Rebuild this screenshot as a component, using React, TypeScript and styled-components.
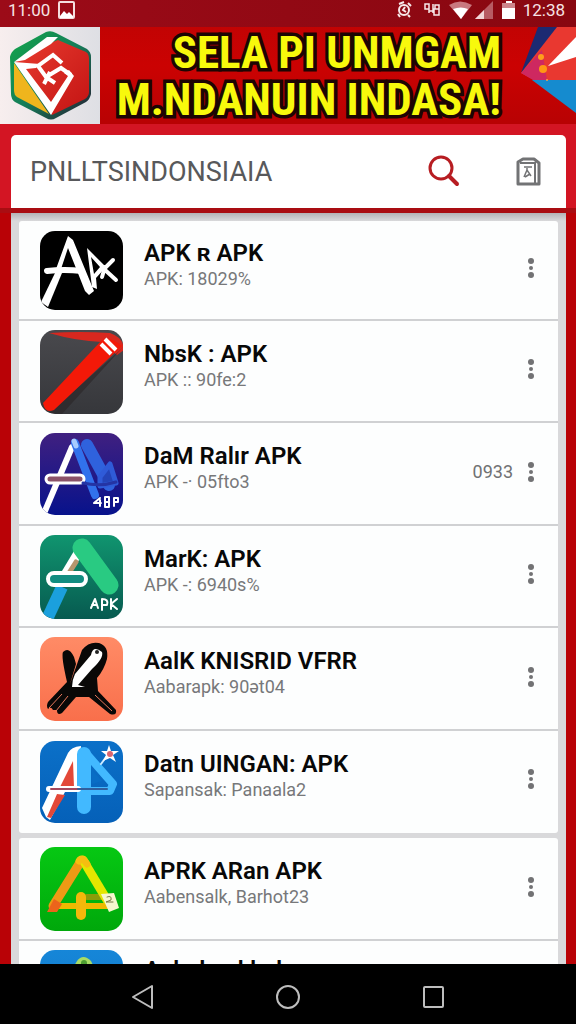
import React, { useId } from "react";
import styled, { createGlobalStyle } from "styled-components";

const GlobalStyle = createGlobalStyle`
  *, *::before, *::after { box-sizing: border-box; }
  html, body, #root { height: 100%; }
  body {
    margin: 0;
    background: #b90206;
    font-family: Roboto, "Liberation Sans", sans-serif;
    color: #080808;
  }
`;

const Screen = styled.div`
  display: flex;
  flex-direction: column;
  height: 100vh;
  overflow: hidden;
`;

const StatusBar = styled.div`
  display: flex;
  flex: none;
  align-items: center;
  justify-content: space-between;
  height: 27px;
  padding: 0 11px 7px 8px;
  background: linear-gradient(90deg, #9c0b18, #880710);
  color: #f6e3e4;
  font-size: 17px;
  line-height: 20px;
`;

const StatusGroup = styled.div<{ $gap: number }>`
  display: flex;
  align-items: center;
  gap: ${(p) => p.$gap}px;
`;

const Glyph = styled.svg`
  display: block;
  flex: none;
`;

const Banner = styled.div`
  display: flex;
  flex: none;
  align-items: stretch;
  justify-content: space-between;
  height: 97px;
  background: linear-gradient(180deg, #c20303, #cb0202 40%, #b80203);
`;

const Slogan = styled.h1`
  flex: 1;
  min-width: 0;
  margin: 0;
  padding: 2px 19px 0 0;
  color: #f8f90c;
  font-family: "Liberation Sans Narrow", "Roboto Condensed", Roboto, sans-serif;
  font-size: 45px;
  font-weight: 700;
  line-height: 47px;
  text-align: right;
  white-space: nowrap;
  -webkit-text-stroke: 7px #1c0503;
  paint-order: stroke fill;
`;

const SloganLine = styled.span`
  display: block;
`;

const Header = styled.header`
  flex: none;
  padding: 11px 10px 5px 11px;
  background: linear-gradient(180deg, #d31523 0 84px, #a90d12 84px);
`;

const SearchBar = styled.form`
  display: flex;
  align-items: center;
  height: 73px;
  padding: 0 25px 0 19px;
  border-radius: 5px 5px 0 0;
  background: #fff;
`;

const SearchInput = styled.input`
  flex: 1;
  min-width: 0;
  padding: 0;
  border: 0;
  outline: 0;
  background: none;
  color: #58595b;
  font: 400 27px/40px Roboto, "Liberation Sans", sans-serif;
`;

const IconButton = styled.button`
  display: grid;
  flex: none;
  place-items: center;
  margin: 0;
  padding: 0;
  border: 0;
  background: none;
  cursor: pointer;
`;

const SearchActions = styled.div`
  display: flex;
  align-items: center;
  gap: 54px;
`;

const Panel = styled.main`
  display: flex;
  flex: 1;
  flex-direction: column;
  gap: 5px;
  min-height: 0;
  margin: 0 10px 0 11px;
  padding: 8px 8px 0;
  overflow: hidden;
  background: linear-gradient(180deg, #b3b3b6, #d9d9db 8px);
`;

const Card = styled.ul`
  flex: none;
  margin: 0;
  padding: 0;
  border-radius: 3px;
  background: #fdfefe;
  list-style: none;
`;

const Row = styled.li`
  display: flex;
  align-items: center;
  height: 103px;
  padding: 9px 15px 8px 21px;
  border-bottom: 2px solid #d0d1d3;

  &:nth-child(even) { height: 102px; }
  &:first-child:not(:nth-last-child(2)) { height: 100px; }
  &:last-child { border-bottom-color: transparent; }
`;

const Labels = styled.div<{ $raised: boolean }>`
  flex: 1;
  min-width: 0;
  padding: 0 0 ${(p) => (p.$raised ? 20 : 12)}px 21px;
  white-space: nowrap;
`;

const AppName = styled.h2`
  margin: 0;
  font-size: 24px;
  font-weight: 600;
  line-height: 28px;
`;

const AppInfo = styled.p`
  min-height: 24px;
  margin: 0;
  color: #77787a;
  font-size: 18px;
  line-height: 24px;
`;

const Side = styled.div`
  display: flex;
  align-items: center;
  gap: 6px;
  padding-bottom: 5px;
  color: #707173;
  font-size: 18px;
`;

const NavBar = styled.nav`
  display: flex;
  flex: none;
  align-items: center;
  justify-content: center;
  gap: 117px;
  height: 60px;
  padding-top: 5px;
  background: #000;
`;

type ArtName = "black" | "pen" | "indigo" | "teal" | "orange" | "blue" | "green" | "azure";

const tileColors: Record<ArtName, [string, string]> = {
  black: ["#000", "#000"],
  pen: ["#49494d", "#36373b"],
  indigo: ["#402080", "#06128c"],
  teal: ["#10956f", "#075a50"],
  orange: ["#ff8b66", "#f96f4b"],
  blue: ["#0b70c8", "#0560b8"],
  green: ["#06c813", "#00a80b"],
  azure: ["#1686d8", "#1078c8"],
};

const art: Record<ArtName, React.ReactNode> = {
  black: (
    <g fill="#fff" stroke="#fff" strokeLinecap="round" strokeLinejoin="round">
      <path d="M28 5 33 9 54 60 49 64 45 60 28 17 21 38H16Z" stroke="none" />
      <path d="M15 42H22L8 76 1 71Z" stroke="none" />
      <path d="M7 40Q24 38 42 40" fill="none" strokeWidth="6" />
      <path d="M47 17 66 36 56 47 57 58 52 56ZM51 26 54 43 60 36Z" fillRule="evenodd" stroke="none" />
      <path d="M65 36 62 46M73 29 64 38 76 49" fill="none" strokeWidth="4" />
    </g>
  ),
  pen: (
    <>
      <path d="M9 3Q40 1 70 3Q84 8 84 20L77 25 62 12Q36 11 9 3Z" fill="#d8281f" />
      <path d="M9 83 78 22 84 16 22 84Z" fill="#2a2527" opacity=".6" />
      <path d="M3 73 62 10Q70 6 82 16L14 80Q5 84 3 73Z" fill="#f31908" />
      <path d="M65 9 76 20M61 14 71 24" stroke="#fff" strokeWidth="4" />
    </>
  ),
  indigo: (
    <g fill="none" strokeLinecap="round" strokeLinejoin="round">
      <path d="M5 78 32 14" stroke="#fff" strokeWidth="6" />
      <path d="M35 10 55 62" stroke="#3171ec" strokeWidth="8" />
      <path d="M47 12 69 52" stroke="#2f62dd" strokeWidth="12" />
      <path d="M60 44 70 31 76 50 60 53Z" fill="#2444b8" stroke="#2f5bd8" strokeWidth="5" />
      <path d="M34 8 36 13" stroke="#a6cbff" strokeWidth="5" />
      <rect x="6" y="42" width="38" height="8" rx="4" fill="#8b5269" stroke="#fff" strokeWidth="3" />
      <path d="M43 50Q60 54 76 49" stroke="#2434a4" strokeWidth="3" />
      <path d="M60 65 54 70H61M60 67V73M65 64V74H69V64ZM65 69H69M74 73V65H78V69H74" stroke="#fff" strokeWidth="2" />
    </g>
  ),
  teal: (
    <g fill="none" strokeLinecap="round" strokeLinejoin="round">
      <path d="M26 38 38 18" stroke="#fff" strokeWidth="9" />
      <path d="M29 38 36 27" stroke="#b6966d" strokeWidth="5" />
      <path d="M22 52 8 82" stroke="#1ba0dd" strokeWidth="12" strokeLinecap="butt" />
      <path d="M42 13 69 50" stroke="#29ca82" strokeWidth="19" />
      <rect x="8" y="38" width="38" height="12" rx="6" fill="#128d81" stroke="#fff" strokeWidth="4" />
      <path d="M51 73 55 64 58 73M52 70H57M62 75V64Q69 64 67 70H62M71 64V74M77 64 71 69 77 74" stroke="#fff" strokeWidth="2" />
    </g>
  ),
  orange: (
    <>
      <path d="M30 47 42 13Q49 4 59 6Q69 9 67 22Q64 33 57 41L58 54 76 73Q77 79 70 77L49 60 36 60 22 76Q17 79 17 73L13 73Q11 69 8 72Q6 69 8 65L27 45Q21 19 23 15Q29 9 34 20L36 27Z" fill="#090807" />
      <path d="M51 18Q53 8 62 15Q64 21 52 32L38 48 45 50H32Q32 43 35 37Z" fill="#fff" />
      <circle cx="57" cy="15" r="2" fill="#222" />
      <path d="M9 71 22 57M16 74 28 59M72 74 55 58" stroke="#e8795c" strokeWidth="1" />
    </>
  ),
  blue: (
    <g fill="none" strokeLinecap="round" strokeLinejoin="round">
      <path d="M2 67 28 12Q31 6 41 5L38 50 25 51 10 79 6 76Z" fill="#fff" />
      <path d="M33 20 20 46H34ZM17 53 25 54 11 77 7 76Z" fill="#e34838" />
      <path d="M44 13V66" stroke="#42b9ff" strokeWidth="14" />
      <path d="M45 11 73 43 70 50H45" stroke="#42b9ff" strokeWidth="8" />
      <path d="M52 29V43L62 40Z" fill="#086dc5" />
      <path d="M9 48H38" stroke="#fff" strokeWidth="6" />
      <path d="M11 48H38" stroke="#a6485b" strokeWidth="2" />
      <path d="M38 48H67" stroke="#315f9d" strokeWidth="2" />
      <path d="M61 23 69 12" stroke="#cbe9ff" strokeWidth="2" />
      <path d="M69 4 71 10 79 10 73 14 76 21 70 17 63 20 66 14 61 10H67Z" fill="#fff" />
      <circle cx="70" cy="13" r="3" fill="#db6670" />
    </g>
  ),
  green: (
    <g fill="none" strokeLinecap="round" strokeLinejoin="round">
      <path d="M16 59H68" stroke="#eeb900" strokeWidth="6" />
      <path d="M47 50H64" stroke="#8b9c09" strokeWidth="6" />
      <path d="M13 59 41 14" stroke="#ed9a15" strokeWidth="9" />
      <path d="M43 13 67 53" stroke="#e5e600" strokeWidth="9" />
      <path d="M39 14Q42 9 47 17" stroke="#f6be10" strokeWidth="7" />
      <path d="M14 52 22 57 17 65H7Z" fill="#ec641b" />
      <path d="M41 50V68" stroke="#f2b80b" strokeWidth="10" />
      <path d="M61 47 74 46 79 61 69 65Z" fill="#f7f6cf" />
      <path d="M67 50Q72 48 71 53L66 55H73" stroke="#777747" strokeWidth="1" />
    </g>
  ),
  azure: (
    <>
      <path d="M20 40 37 11Q43 3 51 11L65 40Z" fill="#a8dc65" />
      <circle cx="44" cy="13" r="3" fill="#4d9e31" />
    </>
  ),
};

const AppIcon = ({ name }: { name: ArtName }) => {
  const id = useId();
  const [from, to] = tileColors[name];
  const height = name === "black" ? 79 : name === "indigo" || name === "blue" ? 82 : 84;
  return (
    <Glyph width="83" height={height} viewBox={`0 0 83 ${height}`} aria-hidden="true">
      <defs>
        <linearGradient id={`${id}g`} x1="0" y1="0" x2="0" y2="1">
          <stop stopColor={from} />
          <stop offset="1" stopColor={to} />
        </linearGradient>
        <clipPath id={`${id}c`}>
          <rect width="83" height={height} rx="15" />
        </clipPath>
      </defs>
      <g clipPath={`url(#${id}c)`}>
        <rect width="84" height="84" fill={`url(#${id}g)`} />
        {art[name]}
      </g>
    </Glyph>
  );
};

interface AppEntry {
  name: string;
  info: string;
  icon: ArtName;
  time?: string;
}

const topApps: AppEntry[] = [
  { name: "APK ʀ APK", info: "APK: 18029%", icon: "black" },
  { name: "NbsK : APK", info: "APK :: 90fe:2", icon: "pen" },
  { name: "DaM Ralır APK", info: "APK -· 05fto3", icon: "indigo", time: "0933" },
  { name: "MarK: APK", info: "APK -: 6940s%", icon: "teal" },
  { name: "AalK KNISRID VFRR", info: "Aabarapk: 90ət04", icon: "orange" },
  { name: "Datn UINGAN: APK", info: "Sapansak: Panaala2", icon: "blue" },
];

const moreApps: AppEntry[] = [
  { name: "APRK ARan APK", info: "Aabensalk, Barhot23", icon: "green" },
  { name: "Apk dan khsl", info: "", icon: "azure" },
];

const AppRow = ({ app }: { app: AppEntry }) => (
  <Row>
    <AppIcon name={app.icon} />
    <Labels $raised={!app.info}>
      <AppName>{app.name}</AppName>
      <AppInfo>{app.info}</AppInfo>
    </Labels>
    <Side>
      {app.time && <span>{app.time}</span>}
      <IconButton type="button" aria-label={`Options for ${app.name}`}>
        <Glyph width="24" height="24" viewBox="0 0 24 24" fill="#727274">
          <circle cx="12" cy="5" r="3" />
          <circle cx="12" cy="12" r="2" />
          <circle cx="12" cy="19" r="3" />
        </Glyph>
      </IconButton>
    </Side>
  </Row>
);

const BannerLogo = () => (
  <Glyph width="100" height="97" viewBox="0 0 100 97" aria-hidden="true">
    <defs>
      <linearGradient id="paper" x1="0" x2="1">
        <stop stopColor="#f7eeee" />
        <stop offset="1" stopColor="#dedfe4" />
      </linearGradient>
      <linearGradient id="edge" x1="0" y1="0" x2="1" y2="1">
        <stop stopColor="#12a84b" />
        <stop offset=".5" stopColor="#157d59" />
        <stop offset="1" stopColor="#271b31" />
      </linearGradient>
      <linearGradient id="face" x1="0" y1="0" x2="1" y2="1">
        <stop stopColor="#e83c2f" />
        <stop offset="1" stopColor="#c31313" />
      </linearGradient>
    </defs>
    <path d="M0 0H100V97H0Z" fill="url(#paper)" />
    <path d="M46 5Q51 3 56 6L87 22Q91 25 91 30V67Q90 72 86 75L56 91Q51 94 46 91L15 75Q11 72 11 67L10 30Q11 25 15 22Z" fill="url(#edge)" />
    <path d="M14 36 49 87 17 70Q14 68 14 63Z" fill="#efb51d" />
    <path d="M15 35 30 24 58 13 86 25Q89 27 89 32V65Q89 69 85 72L52 88Z" fill="url(#face)" />
    <path d="M14 35 47 10H58L51 17 25 33Z" fill="#fff" />
    <path d="M14 35 40 37 36 41 26 42 51 75 68 49 64 46 69 43 74 49 51 88Z" fill="#fff" />
    <path d="M62 36 53 28 38 39 46 50 61 41 71 48M46 50 55 56M50 45 44 57" fill="none" stroke="#fff" strokeWidth="4" />
  </Glyph>
);

const BannerFlag = () => (
  <Glyph width="56" height="97" viewBox="0 0 56 97" aria-hidden="true">
    <path d="M18 0H38L14 36 1 46Z" fill="#1c2a72" />
    <path d="M37 0H56V53H14L1 46Z" fill="#e93830" />
    <path d="M1 46 22 23 27 53H13Z" fill="#ce2860" />
    <path d="M56 10 28 39 56 30Z" fill="#fff" />
    <path d="M12 53H56V86Z" fill="#158bcf" />
    <circle cx="21" cy="30" r="3" fill="#ff9e1b" />
    <circle cx="23" cy="42" r="4" fill="#ff9714" />
    <circle cx="27" cy="53" r="1" fill="#f5a441" />
  </Glyph>
);

const StatusIcons = () => (
  <Glyph width="119" height="18" viewBox="0 0 119 18" aria-hidden="true">
    <g fill="none" stroke="#f7e8e9" strokeWidth="2">
      <circle cx="8" cy="9" r="5" />
      <path d="M3 3 8 1M9 6 7 9 10 11M12 2 15 5M12 14 14 16M2 13 4 16" />
      <path d="M29 3H33V8H29ZM33 8V12M37 3V12M33 10H38M39 4H43V8H39ZM38 8H43V14H38Z" strokeWidth="1.5" />
    </g>
    <path d="M53 4Q64-3 76 4L65 18Z" fill="#c97980" />
    <path d="M57 8Q65 5 72 8L65 18Z" fill="#fff" />
    <path d="M79 18 97 0V18Z" fill="#b75b63" />
    <path d="M79 18 88 9V18Z" fill="#f2d5d7" />
    <path d="M106 2H110V0H116V2H119V18H106Z" fill="#fff" />
    <path d="M106 2H119V7H106Z" fill="#cd858b" />
  </Glyph>
);

export default function App() {
  return (
    <Screen>
      <GlobalStyle />
      <StatusBar>
        <StatusGroup $gap={8}>
          <span>11:00</span>
          <Glyph width="17" height="18" viewBox="0 0 17 18" aria-hidden="true">
            <rect x="1" y="1" width="15" height="16" rx="1" fill="none" stroke="#f5dddf" strokeWidth="2" />
            <path d="M2 15 6 10 9 13 11 11 15 15V17H2Z" fill="#fff" />
          </Glyph>
        </StatusGroup>
        <StatusGroup $gap={8}>
          <StatusIcons />
          <span>12:38</span>
        </StatusGroup>
      </StatusBar>

      <Banner>
        <BannerLogo />
        <Slogan>
          <SloganLine>SELA PI UNMGAM</SloganLine>
          <SloganLine>M.NDANUIN INDASA!</SloganLine>
        </Slogan>
        <BannerFlag />
      </Banner>

      <Header>
        <SearchBar role="search" onSubmit={(e) => e.preventDefault()}>
          <SearchInput aria-label="Search apps" defaultValue="PNLLTSINDONSIAIA" />
          <SearchActions>
            <IconButton type="submit" aria-label="Search">
              <Glyph width="34" height="34" viewBox="0 0 34 34" fill="none" stroke="#b71d22" strokeLinecap="round">
                <circle cx="14" cy="13" r="11" strokeWidth="3" />
                <path d="M22 21 30 29" strokeWidth="4" />
              </Glyph>
            </IconButton>
            <IconButton type="button" aria-label="Saved apps">
              <Glyph width="26" height="30" viewBox="0 0 26 30" fill="none" stroke="#727375">
                <path d="M3 5 8 2H19L24 6V27H3Z" strokeWidth="3" strokeLinejoin="round" />
                <path d="M5 6H20V26" strokeWidth="2" />
                <path d="M9 10H17M9 20 12 13 16 19M10 20 15 17M12 14 12 11" strokeWidth="1.5" />
              </Glyph>
            </IconButton>
          </SearchActions>
        </SearchBar>
      </Header>

      <Panel>
        <Card>
          {topApps.map((app) => (
            <AppRow key={app.name} app={app} />
          ))}
        </Card>
        <Card>
          {moreApps.map((app) => (
            <AppRow key={app.name} app={app} />
          ))}
        </Card>
      </Panel>

      <NavBar aria-label="System">
        <IconButton type="button" aria-label="Back">
          <Glyph width="28" height="28" viewBox="0 0 28 28" fill="none" stroke="#bdbdbd" strokeWidth="2">
            <path d="M23 3V25L4 14Z" strokeLinejoin="round" />
          </Glyph>
        </IconButton>
        <IconButton type="button" aria-label="Home">
          <Glyph width="28" height="28" viewBox="0 0 28 28" fill="none" stroke="#bdbdbd" strokeWidth="2">
            <circle cx="14" cy="14" r="11" />
          </Glyph>
        </IconButton>
        <IconButton type="button" aria-label="Recent apps">
          <Glyph width="28" height="28" viewBox="0 0 28 28" fill="none" stroke="#bdbdbd" strokeWidth="2">
            <rect x="5" y="4" width="19" height="20" rx="1" />
          </Glyph>
        </IconButton>
      </NavBar>
    </Screen>
  );
}
